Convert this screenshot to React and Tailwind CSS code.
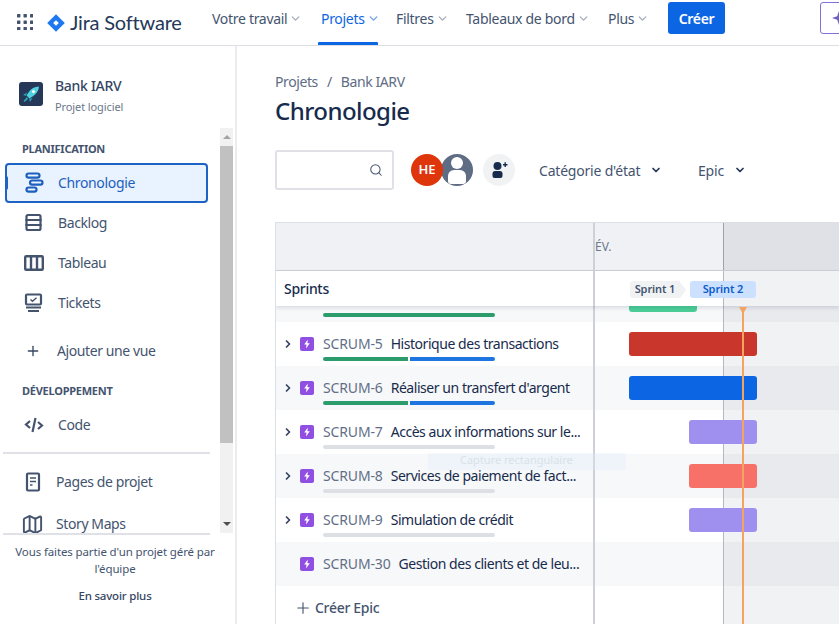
import React from "react";
import { ChevronDown, ChevronRight, Plus, Search, Map as MapIcon } from "lucide-react";

const font = { fontFamily: '"Noto Sans", "Open Sans", sans-serif' };

function AppGrid() {
    const cells = [0, 6.5, 13];
    return (
        <svg width="16" height="16" viewBox="0 0 16 16" className="shrink-0">
            {cells.map((y) =>
                cells.map((x) => <rect key={`${x}-${y}`} x={x} y={y} width="3.4" height="3.4" rx="0.6" fill="#44546f" />)
            )}
        </svg>
    );
}

function JiraMark() {
    return (
        <svg width="18" height="18" viewBox="0 0 18 18" className="shrink-0">
            <path d="M9 0.2 17.8 9 9 17.8 0.2 9Z" fill="#1f78f0" />
            <path d="M9 6.2 11.8 9 9 11.8 6.2 9Z" fill="#fff" />
        </svg>
    );
}

function RocketAvatar() {
    return (
        <svg width="24" height="24" viewBox="0 0 24 24" className="shrink-0 rounded-[3px]">
            <rect width="24" height="24" fill="#253858" />
            <path d="M20 4.5c-4.5.2-8 2-10.2 5.5L7.5 13.5l3 3 3.5-2.3C17.5 12 19.700 8.500 20 4.500Z" fill="#4fd1e0" />
            <circle cx="14.500" cy="9.500" r="1.500" fill="#fff" />
            <path d="M8 10.500 4 13l3 .8ZM13.500 16 11 20l-.8-3ZM8 15l-3.500 4 1 1L9 17Z" fill="#2aa5bd" />
        </svg>
    );
}

function TimelineIcon() {
    return (
        <svg width="20" height="22" viewBox="0 0 20 22" fill="none" stroke="#1d5fbd" strokeWidth="2.2" className="shrink-0">
            <rect x="1.500" y="1.500" width="13" height="4.200" rx="2.100" />
            <rect x="5" y="8.500" width="12.500" height="4.200" rx="2.100" />
            <rect x="1.500" y="15.500" width="10" height="4.200" rx="2.100" />
        </svg>
    );
}

function BacklogIcon() {
    return (
        <svg width="20" height="20" viewBox="0 0 20 20" fill="none" stroke="#44546f" strokeWidth="2.2" className="shrink-0">
            <path d="M4 2h11a1.500 1.500 0 0 1 1.500 1.500V7H2.500V3.500A1.500 1.500 0 0 1 4 2Z" />
            <path d="M2.500 7h14v5h-14Z" />
            <path d="M2.500 12h14v3.500A1.500 1.500 0 0 1 15 17H4a1.500 1.500 0 0 1-1.500-1.500Z" />
        </svg>
    );
}

function BoardIcon() {
    return (
        <svg width="20" height="16" viewBox="0 0 20 16" fill="none" stroke="#44546f" strokeWidth="2.4" className="shrink-0">
            <rect x="1.200" y="1.200" width="17.600" height="13.600" rx="1" />
            <path d="M7 1.200v13.600M13 1.200v13.600" />
        </svg>
    );
}

function TicketsIcon() {
    return (
        <svg width="20" height="20" viewBox="0 0 20 20" fill="none" stroke="#44546f" strokeWidth="2.2" className="shrink-0">
            <rect x="2" y="1.500" width="15" height="10" rx="1" />
            <path d="M6.500 6.500 8.500 8.200 12.500 4.800" strokeWidth="1.500" />
            <path d="M2 14.500h15M4 18h11" />
        </svg>
    );
}

function CodeIcon() {
    return (
        <svg width="20" height="18" viewBox="0 0 20 18" fill="none" stroke="#44546f" strokeWidth="2.2" className="shrink-0">
            <path d="M6 5 2 8.500 6 12M14 6l4 3.500-4 3.500M11.500 2 8.500 16" />
        </svg>
    );
}

function PageIcon() {
    return (
        <svg width="16" height="20" viewBox="0 0 16 20" fill="none" stroke="#44546f" strokeWidth="2.2" className="shrink-0">
            <rect x="2" y="1.500" width="12" height="17" rx="1" />
            <path d="M5 6h6M5 9.500h6M5 13h2.500" strokeWidth="1.500" />
        </svg>
    );
}

function EpicIcon() {
    return (
        <svg width="14" height="14" viewBox="0 0 14 14" className="shrink-0">
            <rect width="14" height="14" rx="2" fill="#904ee2" />
            <path d="M7.800 2.500 4.200 7.600h2.300L6 11.500l3.800-5.200H7.400Z" fill="#fff" />
        </svg>
    );
}

function NavItem({ label, width, active }) {
    return (
        <div className={`flex items-center h-[45px] relative shrink-0 ${width} ${active ? "text-[#0c66e4]" : "text-[#44546f]"}`}>
            <span className="text-[14px] tracking-[-0.3px] whitespace-nowrap -mt-[9px]">{label}</span>
            <ChevronDown size={13} strokeWidth={2.5} className={`ml-[2px] -mt-[8px] ${active ? "text-[#6f9fe8]" : "text-[#a5adba]"}`} />
        </div>
    );
}

function TopBar() {
    return (
        <div className="h-[46px] border-b border-[#dcdfe4] flex items-center bg-white shrink-0 overflow-hidden">
            <div className="pl-[17px] mr-[14px] -mt-[1px] shrink-0"><AppGrid /></div>
            <JiraMark />
            <span className="ml-[5px] w-[142px] shrink-0 text-[20px] text-[#253858] -mt-[1px] tracking-[-0.2px] whitespace-nowrap" style={{ fontFamily: "Lato, sans-serif" }}>Jira Software</span>
            <NavItem label="Votre travail" width="w-[106px]" />
            <div className="relative shrink-0">
                <NavItem label="Projets" width="w-[78px] pl-[3px]" active />
                <div className="absolute bottom-0 left-0 w-[60px] h-[3px] bg-[#0c66e4] rounded-t-[1px]" />
            </div>
            <NavItem label="Filtres" width="w-[70px]" />
            <NavItem label="Tableaux de bord" width="w-[142px]" />
            <NavItem label="Plus" width="w-[60px]" />
            <button className="h-[32px] w-[57px] rounded-[3px] bg-[#0c66e4] text-white text-[14px] font-semibold tracking-[-0.3px] -mt-[9px] shrink-0">Créer</button>
            <div className="ml-[95px] h-[32px] w-[40px] rounded-[3px] border border-[#8270db] -mt-[9px] shrink-0 pl-[11px] flex items-center">
                <svg width="14" height="14" viewBox="0 0 14 14"><path d="M7 0 8.800 5.200 14 7 8.800 8.800 7 14 5.200 8.800 0 7 5.200 5.200Z" fill="#6e5dc6" /></svg>
            </div>
        </div>
    );
}

function SideItem({ icon, label, active, textGap = "w-[33px]" }) {
    if (active) {
        return (
            <div className="relative mx-[5px] h-[40px] w-[203px] rounded-[4px] border-2 border-[#1d63c4] bg-[#e9f2ff] flex items-center pl-[18px] text-[#1d5fbd]">
                <div className="absolute -left-[2px] top-[11px] w-[3px] h-[14px] rounded-r-[2px] bg-[#1d63c4]" />
                <div className="w-[33px] shrink-0">{icon}</div>
                <span className="text-[14px] tracking-[-0.35px] -mt-[1px]">{label}</span>
            </div>
        );
    }
    return (
        <div className="h-[40px] flex items-center pl-[24px] text-[#44546f]">
            <div className={`${textGap} shrink-0`}>{icon}</div>
            <span className="text-[14px] tracking-[-0.4px] whitespace-nowrap -mt-[1px]">{label}</span>
        </div>
    );
}

function SideHeading({ children, className }) {
    return <div className={`pl-[22px] text-[11px] font-bold text-[#44546f] tracking-[-0.25px] ${className}`}>{children}</div>;
}

function Sidebar() {
    return (
        <div className="w-[237px] shrink-0 border-r-2 border-[#ebecf0] flex flex-col h-full bg-white">
            <div className="h-[82px] shrink-0 flex items-center pl-[19px] pt-[14px]">
                <RocketAvatar />
                <div className="ml-[12px] pt-[2px]">
                    <div className="text-[14px] font-medium text-[#344563] tracking-[-0.3px] leading-[20px]">Bank IARV</div>
                    <div className="text-[11px] text-[#6b778c] tracking-[-0.1px] leading-[16px] mt-[3px]">Projet logiciel</div>
                </div>
            </div>
            <div className="h-[405px] flex shrink-0">
                <div className="w-[220px] shrink-0 overflow-hidden relative">
                    <SideHeading className="pt-[13px] h-[35px] leading-[16px]">PLANIFICATION</SideHeading>
                    <SideItem active icon={<TimelineIcon />} label="Chronologie" />
                    <SideItem icon={<BacklogIcon />} label="Backlog" textGap="w-[34px]" />
                    <SideItem icon={<BoardIcon />} label="Tableau" textGap="w-[34px]" />
                    <SideItem icon={<TicketsIcon />} label="Tickets" textGap="w-[34px]" />
                    <div className="h-[40px] mt-[8px] flex items-center pl-[25px] text-[#44546f]">
                        <Plus size={16} strokeWidth={2} className="mr-[16px] text-[#344563]" />
                        <span className="text-[14px] tracking-[-0.4px] whitespace-nowrap -mt-[1px]">Ajouter une vue</span>
                    </div>
                    <SideHeading className="mt-[9px] h-[25px] pt-[3px] leading-[16px]">DÉVELOPPEMENT</SideHeading>
                    <SideItem icon={<CodeIcon />} label="Code" textGap="w-[34px]" />
                    <div className="mx-[3px] mt-[7px] w-[207px] h-[2px] bg-[#dfe1e6]" />
                    <div className="h-[40px] mt-[8px] flex items-center pl-[25px] text-[#44546f]">
                        <div className="w-[31px] shrink-0"><PageIcon /></div>
                        <span className="text-[14px] tracking-[-0.4px] -mt-[1px]">Pages de projet</span>
                    </div>
                    <div className="h-[40px] mt-[2px] flex items-center pl-[21px] text-[#44546f]">
                        <div className="w-[35px] shrink-0"><MapIcon size={23} strokeWidth={2} /></div>
                        <span className="text-[14px] tracking-[-0.4px] -mt-[1px]">Story Maps</span>
                    </div>
                </div>
                <div className="w-[13px] shrink-0 bg-[#f1f1f1] flex flex-col">
                    <div className="h-[18px] flex items-center justify-center"><div className="w-0 h-0 border-x-[4px] border-x-transparent border-b-[4px] border-b-[#a3a3a3]" /></div>
                    <div className="h-[297px] bg-[#c1c1c1]" />
                    <div className="flex-1 flex items-end justify-center pb-[7px]"><div className="w-0 h-0 border-x-[4px] border-x-transparent border-t-[4px] border-t-[#505050]" /></div>
                </div>
            </div>
            <div className="relative flex-1 text-center text-[#44546f]">
                <div className="absolute left-[3px] top-0 w-[207px] h-[2px] bg-[#dfe1e6]" />
                <div className="w-[230px] pt-[11px] leading-[16.500px] tracking-[-0.12px] text-[11.500px]">Vous faites partie d'un projet géré par<br />l'équipe</div>
                <div className="w-[230px] mt-[11px] text-[11.500px] font-medium tracking-[-0.2px] text-[#344563] leading-[16px]">En savoir plus</div>
            </div>
        </div>
    );
}

function ProgressBar({ segments }) {
    return (
        <div className="ml-[47px] w-[172px] flex gap-[2px] mt-[2px]">
            {segments === "gray" && <div className="h-[4px] w-full rounded-full bg-[#dcdfe4]" />}
            {segments === "green" && <div className="h-[4px] w-full rounded-full bg-[#2c9c6c]" />}
            {segments === "split" && (
                <>
                    <div className="h-[4px] flex-1 rounded-l-full bg-[#2c9c6c]" />
                    <div className="h-[4px] flex-1 rounded-r-full bg-[#1f75e0]" />
                </>
            )}
        </div>
    );
}

function Row({ id, title, progress, bar, expandable = true, stripe }) {
    return (
        <div className="flex h-[44px]">
            <div className={`w-[319px] shrink-0 pt-[11px] border-r-2 border-[#cdd0d6] ${stripe ? "bg-[#f7f8f9]" : "bg-white"}`}>
                <div className="flex items-center h-[22px]">
                    <div className="w-[24px] shrink-0 flex justify-start pl-[6px]">
                        {expandable && <ChevronRight size={12} strokeWidth={3.500} className="text-[#344563]" />}
                    </div>
                    <EpicIcon />
                    <span className="ml-[9px] pb-[2px] text-[14px] text-[#626f86] tracking-[-0.15px] whitespace-nowrap">{id}</span>
                    <span className="ml-[8px] pb-[2px] text-[14px] text-[#172b4d] tracking-[-0.45px] whitespace-nowrap">{title}</span>
                </div>
                {progress && <ProgressBar segments={progress} />}
            </div>
            <div className="flex-1 relative flex">
                <div className={`w-[128px] shrink-0 ${stripe ? "bg-[#f7f8f9]" : "bg-white"}`} />
                <div className={`flex-1 border-l border-[#b3b9c4] ${stripe ? "bg-[#e9eaee]" : "bg-[#f1f2f4]"}`} />
                {bar && <div className={`absolute top-[10px] h-[24px] rounded-[3px] ${bar}`} />}
            </div>
        </div>
    );
}

function Timeline() {
    return (
        <div className="mt-[32px] border-l border-t border-[#dcdfe4] relative flex-1 overflow-hidden">
            {/* month header */}
            <div className="flex h-[48px] border-b border-[#cdd0d6]">
                <div className="w-[319px] shrink-0 bg-[#f0f1f4] border-r-2 border-[#cdd0d6]" />
                <div className="w-[128px] shrink-0 bg-[#f0f1f4] flex items-center text-[12px] text-[#6b778c]">ÉV.</div>
                <div className="flex-1 bg-[#dfe1e6] border-l border-[#9aa1ae]" />
            </div>
            {/* sprints row */}
            <div className="flex h-[35px] relative z-10 shadow-[0_2px_4px_rgba(9,30,66,0.13)]">
                <div className="w-[319px] shrink-0 bg-white border-r-2 border-[#cdd0d6] pl-[8px] flex items-center text-[14px] font-medium text-[#172b4d] tracking-[-0.3px]">Sprints</div>
                <div className="w-[128px] shrink-0 bg-white" />
                <div className="flex-1 bg-[#f1f2f4] border-l border-[#b3b9c4]" />
                <div className="absolute left-[354px] top-[10px] flex items-center text-[11px] font-semibold tracking-[-0.1px]">
                    <div className="h-[17px] w-[50px] bg-[#f1f2f4] rounded-l-[3px] flex items-center justify-center text-[#44546f]">Sprint 1</div>
                    <div className="w-0 h-0 border-y-[8.500px] border-y-transparent border-l-[6px] border-l-[#f1f2f4]" />
                    <div className="ml-[4px] h-[17px] w-[66px] bg-[#cce0ff] rounded-[3px] flex items-center justify-center text-[#0c5bc9]">Sprint 2</div>
                </div>
            </div>
            {/* partly scrolled row */}
            <div className="flex h-[16px]">
                <div className="w-[319px] shrink-0 bg-[#f7f8f9] border-r-2 border-[#cdd0d6] pt-[7px]">
                    <div className="ml-[47px] w-[172px] h-[4px] rounded-full bg-[#2c9c6c]" />
                </div>
                <div className="flex-1 relative flex">
                    <div className="w-[128px] shrink-0 bg-[#f7f8f9]" />
                    <div className="flex-1 bg-[#e9eaee] border-l border-[#b3b9c4]" />
                    <div className="absolute left-[34px] top-0 w-[68px] h-[6px] rounded-b-[3px] bg-[#4bce97]" />
                </div>
            </div>
            <Row id="SCRUM-5" title="Historique des transactions" progress="split" bar="left-[34px] w-[128px] bg-[#c9372c]" />
            <Row stripe id="SCRUM-6" title="Réaliser un transfert d'argent" progress="split" bar="left-[34px] w-[128px] bg-[#0c66e4]" />
            <Row id="SCRUM-7" title="Accès aux informations sur le..." progress="gray" bar="left-[94px] w-[68px] bg-[#9f8fef]" />
            <Row stripe id="SCRUM-8" title="Services de paiement de fact..." progress="gray" bar="left-[94px] w-[68px] bg-[#f87168]" />
            <Row id="SCRUM-9" title="Simulation de crédit" progress="gray" bar="left-[94px] w-[68px] bg-[#9f8fef]" />
            <Row stripe id="SCRUM-30" title="Gestion des clients et de leu..." expandable={false} />
            <div className="flex h-[38px]">
                <div className="w-[319px] shrink-0 bg-white border-r-2 border-[#cdd0d6] flex items-center pl-[18px] pt-[6px] text-[#44546f]">
                    <Plus size={18} strokeWidth={1.500} className="mr-[3px]" />
                    <span className="text-[14px] font-medium tracking-[-0.3px] -mt-[1px]">Créer Epic</span>
                </div>
                <div className="w-[128px] shrink-0 bg-white" />
                <div className="flex-1 bg-[#f1f2f4] border-l border-[#b3b9c4]" />
            </div>
            {/* today marker */}
            <div className="absolute z-20 left-[466px] top-[84px] bottom-0 w-[2px] bg-[#f5a45f]" />
            <div className="absolute z-20 left-[463px] top-[84px] w-0 h-0 border-x-[4px] border-x-transparent border-t-[7px] border-t-[#f5a45f]" />
            {/* faint snipping tool hint left on the screen */}
            <div className="absolute z-20 left-[152px] top-[230px] w-[198px] h-[17px] bg-[#dcebfa]/30 pl-[32px] pt-[1px] text-[11px] leading-[12px] text-[#c4cedb]/50 whitespace-nowrap">Capture rectangulaire</div>
        </div>
    );
}

function FilterButton({ label, chevronGap }) {
    return (
        <div className="flex items-center text-[#44546f]">
            <span className="text-[14px] tracking-[-0.2px] whitespace-nowrap">{label}</span>
            <ChevronDown size={12} strokeWidth={3.500} className={`${chevronGap} text-[#253858]`} />
        </div>
    );
}

function Main() {
    return (
        <div className="flex-1 min-w-0 flex flex-col pl-[38px] bg-white overflow-hidden">
            <div className="pt-[26px] text-[14px] text-[#5e6c84] tracking-[-0.4px] leading-[20px] flex gap-[9px]">
                <span>Projets</span><span>/</span><span>Bank IARV</span>
            </div>
            <h1 className="text-[24px] font-medium text-[#172b4d] tracking-[-0.55px] leading-[32px] mt-[3px]">Chronologie</h1>
            <div className="flex items-center mt-[23px] h-[40px] shrink-0">
                <div className="w-[119px] h-[40px] rounded-[3px] border-2 border-[#dfe1e6] flex items-center justify-end pr-[9px]">
                    <Search size={14} strokeWidth={1.800} className="text-[#44546f]" />
                </div>
                <div className="ml-[17px] w-[32px] h-[32px] rounded-full bg-[#de350b] text-white text-[13px] font-semibold flex items-center justify-center relative z-10 shrink-0">HE</div>
                <div className="-ml-[2px] w-[32px] h-[32px] rounded-full bg-[#5e6c84] shrink-0 overflow-hidden flex flex-col items-center pt-[3px]">
                    <div className="w-[12px] h-[12px] rounded-full bg-white" />
                    <div className="w-[18px] h-[14px] mt-[1px] rounded-t-[6px] rounded-b-[3px] bg-white" />
                </div>
                <div className="ml-[10px] w-[32px] h-[32px] rounded-full bg-[#f1f2f4] flex items-center justify-center shrink-0">
                    <svg width="18" height="18" viewBox="0 0 18 18" fill="#172b4d">
                        <circle cx="7.500" cy="5" r="4" />
                        <path d="M2.500 12.500c0-1.700 1.300-2.500 2.500-2.500h5c1.200 0 2.500.8 2.500 2.500V15a2 2 0 0 1-2 2h-6a2 2 0 0 1-2-2Z" />
                        <path d="M13 3h1.500V1.300h1.400V3h1.600v1.400h-1.600V6h-1.400V4.400H13Z" />
                    </svg>
                </div>
                <div className="ml-[24px] w-[159px] shrink-0"><FilterButton label="Catégorie d'état" chevronGap="ml-[10px]" /></div>
                <div className="shrink-0"><FilterButton label="Epic" chevronGap="ml-[10px]" /></div>
            </div>
            <Timeline />
        </div>
    );
}

export default function App() {
    return (
        <div className="w-[839px] h-[624px] overflow-hidden flex flex-col bg-white" style={font}>
            <TopBar />
            <div className="flex flex-1 min-h-0">
                <Sidebar />
                <Main />
            </div>
        </div>
    );
}
